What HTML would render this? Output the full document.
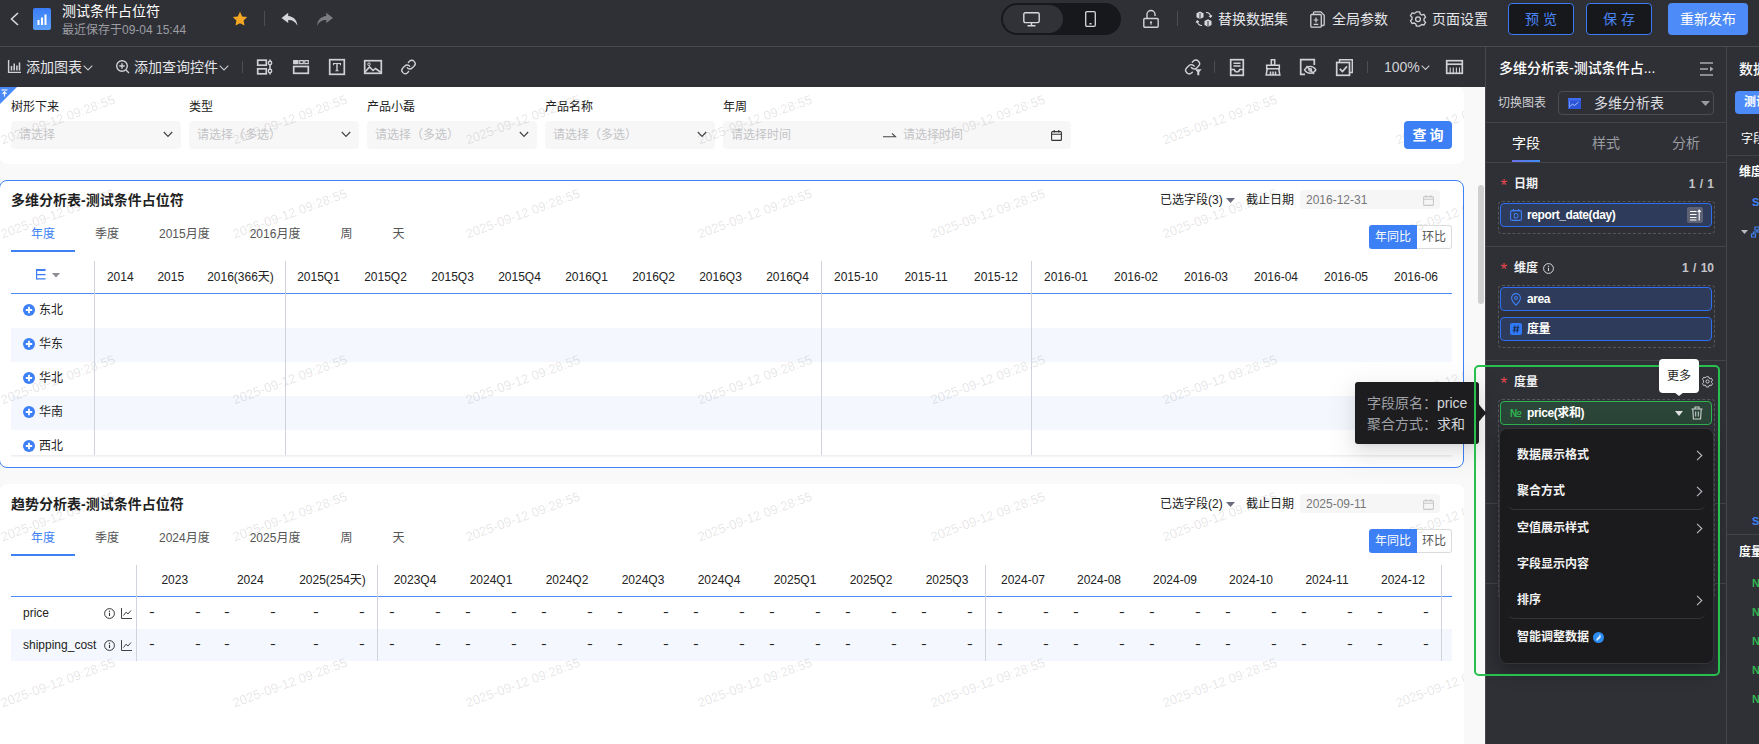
<!DOCTYPE html>
<html lang="zh-CN">
<head>
<meta charset="utf-8">
<title>测试条件占位符</title>
<style>
*{box-sizing:border-box;margin:0;padding:0}
html,body{width:1759px;height:744px;overflow:hidden;background:#2f3036}
body{font-family:"Liberation Sans","Noto Sans CJK SC",sans-serif;font-size:12px;color:#333;position:relative;line-height:1}
.abs{position:absolute}
svg{display:block;overflow:visible}
/* ---------- header ---------- */
#hdr{position:absolute;left:0;top:0;width:1759px;height:47px;background:#2f3036;border-bottom:1px solid #4a4b51}
#tb{position:absolute;left:0;top:47px;width:1485px;height:40px;background:#2f3036}
.ht{position:absolute;color:#e4e5e8;font-size:14px;line-height:20px;white-space:nowrap}
.vdiv{position:absolute;width:1px;background:#4d4e54}
.btn{position:absolute;top:3px;height:32px;border-radius:4px;font-size:14px;line-height:30px;text-align:center;white-space:nowrap}
.btn.ghost{border:1px solid #3b7af0;background:#17181c;color:#4a86f7}
.btn.pri{background:#4d8bf8;color:#fff;line-height:32px}
/* ---------- canvas ---------- */
#canvas{position:absolute;left:0;top:87px;width:1485px;height:657px;background:#f9f9f9;overflow:hidden}
#filter{position:absolute;left:0;top:0;width:1464px;height:77px;background:#fff;border-radius:0 8px 8px 8px;overflow:hidden}
.flab{position:absolute;top:12px;font-size:12px;line-height:16px;color:#222;white-space:nowrap}
.fsel{position:absolute;top:34px;height:28px;width:170px;background:rgba(0,0,20,.03);border-radius:4px;color:#c4c4c6;font-size:12px;line-height:28px;padding-left:8px;white-space:nowrap}
.chev{position:absolute;right:8px;top:10px}
.card{position:absolute;left:0;width:1464px;background:#fff;border-radius:8px;overflow:hidden}
.ctitle{position:absolute;left:11px;font-size:14px;font-weight:bold;color:#1f1f1f;line-height:20px;white-space:nowrap}
.tab{position:absolute;font-size:12px;line-height:16px;color:#555;white-space:nowrap}
.tab.on{color:#3d7ff5}
.wm{position:absolute;width:140px;text-align:center;font-size:13px;line-height:14px;color:rgba(0,0,0,.115);white-space:nowrap;transform:rotate(-20deg);transform-origin:center;pointer-events:none}
.sel{position:absolute;font-size:12px;line-height:16px;color:#222;white-space:nowrap}
.dbox{position:absolute;left:1300px;width:140px;height:18.500px;background:rgba(0,0,20,.035);border-radius:3px;color:#777;font-size:12px;line-height:20px;padding-left:6px}
.yoy{position:absolute;left:1369px;width:48px;height:24px;background:#3d7ff5;color:#fff;font-size:12px;line-height:24px;text-align:center;border-radius:3px 0 0 3px}
.mom{position:absolute;left:1417px;width:35px;height:24px;background:transparent;border:1px solid #dcdcdc;border-left:none;color:#555;font-size:12px;line-height:22px;text-align:center;border-radius:0 3px 3px 0}
.th{position:absolute;font-size:12px;line-height:16px;color:#222;text-align:center;white-space:nowrap}
.vl{position:absolute;width:1px;background:#cfd3de}
.row{position:absolute;left:11px;width:1441px}
.row.alt{background:rgba(61,127,245,.055)}
.rl{position:absolute;font-size:12px;line-height:16px;color:#222;white-space:nowrap}
.d{position:absolute;top:7px;font-size:12px;line-height:16px;color:#222;font-style:normal;transform:scaleX(1.45)}
/* ---------- panel ---------- */
#panel{position:absolute;left:1485px;top:47px;width:242px;height:697px;background:#2f3036;border-left:1px solid #46474d;overflow:hidden}
#p3{position:absolute;left:1726px;top:47px;width:33px;height:697px;background:#2f3036;border-left:1px solid #46474d;overflow:hidden}
.pl{position:absolute;color:#e8e8ea;white-space:nowrap}
.hdiv{position:absolute;height:1px;background:#43444a}
.star{color:#e8474d}
.dash{position:absolute;left:12px;width:217px;border:1px dashed #55565c;border-radius:4px}
.pill{position:absolute;left:14px;width:212px;height:24px;border-radius:4px;border:1px solid #2f6ff2;background:#2e3b5a;color:#fff;font-weight:bold;font-size:12px;line-height:22px;padding-left:26px;white-space:nowrap;letter-spacing:-.4px}
.pill.g{border-color:#2fb650;background:#2b4539}
.mi{position:absolute;left:17px;font-size:12px;font-weight:bold;color:#f2f2f2;line-height:16px;white-space:nowrap}
</style>
</head>
<body>
<!-- HEADER -->
<div id="hdr">
  <svg class="abs" style="left:10px;top:12px" width="9" height="14" viewBox="0 0 9 14"><path d="M8 1 L1.5 7 L8 13" fill="none" stroke="#d8d9dc" stroke-width="1.6"/></svg>
  <div class="abs" style="left:33px;top:8px;width:18px;height:22px;border-radius:2px;background:linear-gradient(180deg,#3b7df7,#5aa0fa)">
    <svg width="18" height="22" viewBox="0 0 18 22"><rect x="4.5" y="12" width="2" height="5" fill="#fff"/><rect x="8" y="9.5" width="2" height="7.5" fill="#fff"/><rect x="11.5" y="6.5" width="2" height="10.5" fill="#fff"/></svg>
  </div>
  <div class="ht" style="left:62px;top:1px;color:#fff">测试条件占位符</div>
  <div class="ht" style="left:62px;top:21px;font-size:12px;line-height:18px;color:#9c9da3">最近保存于09-04 15:44</div>
  <svg class="abs" style="left:232px;top:11px" width="16" height="16" viewBox="0 0 16 16"><path d="M8 .8l2.2 4.6 5 .7-3.6 3.5.9 5L8 12.2 3.5 14.6l.9-5L.8 6.100l5-.7z" fill="#f5a623"/></svg>
  <div class="vdiv" style="left:264px;top:11px;height:15px"></div>
  <svg class="abs" style="left:281px;top:12px" width="17.500" height="15" viewBox="0 0 17 14"><path d="M7 0.500 L0.500 5.500 L7 10.500 V7.500 C11 7.300 14 9 16 13 C15.500 7.500 12 4 7 3.600 Z" fill="#d4d5d9"/></svg>
  <svg class="abs" style="left:316px;top:12px" width="17.500" height="15" viewBox="0 0 17 14"><path d="M10 0.500 L16.500 5.500 L10 10.500 V7.500 C6 7.300 3 9 1 13 C1.500 7.500 5 4 10 3.600 Z" fill="#7b7c82"/></svg>
  <!-- device toggle -->
  <div class="abs" style="left:1001px;top:3px;width:120px;height:32px;border-radius:16px;background:#17181b"></div>
  <div class="abs" style="left:1003px;top:5px;width:60px;height:28px;border-radius:14px;background:#303238"></div>
  <svg class="abs" style="left:1023px;top:12px" width="17" height="15" viewBox="0 0 17 15"><rect x=".8" y=".8" width="15.400" height="9.800" rx="1.500" fill="none" stroke="#d8d9dc" stroke-width="1.400"/><path d="M8.500 10.600v3M4.500 13.800h8" stroke="#d8d9dc" stroke-width="1.400"/></svg>
  <svg class="abs" style="left:1085px;top:11px" width="11" height="16" viewBox="0 0 11 16"><rect x=".7" y=".7" width="9.600" height="14.600" rx="1.200" fill="none" stroke="#d8d9dc" stroke-width="1.300"/><rect x="4.500" y="12" width="2" height="1.500" fill="#d8d9dc"/></svg>
  <svg class="abs" style="left:1143px;top:10px" width="16" height="18" viewBox="0 0 16 18"><rect x=".8" y="8.500" width="14.400" height="8.700" rx="1" fill="none" stroke="#d0d1d5" stroke-width="1.400"/><path d="M4 8.500V4.500a4 4 0 0 1 8 0V6" fill="none" stroke="#d0d1d5" stroke-width="1.400"/><circle cx="8" cy="12.300" r="1.100" fill="#d0d1d5"/><rect x="7.500" y="12.500" width="1" height="2.300" fill="#d0d1d5"/></svg>
  <div class="vdiv" style="left:1177px;top:11px;height:15px"></div>
  <!-- replace dataset -->
  <svg class="abs" style="left:1195px;top:10px" width="18" height="18" viewBox="0 0 18 18"><path d="M1.500 3.200l3.500-1.700 3.500 1.700v4l-3.500 1.700-3.500-1.700z" fill="#d8d9dc"/><path d="M9.500 11l3.500-1.700 3.500 1.700v4l-3.500 1.700-3.500-1.700z" fill="#d8d9dc"/><path d="M5 3.200v5.500M13 11v5.500" stroke="#2f3036" stroke-width="1"/><path d="M11 2.500c3 0 4.500 1.800 4.700 4.500M14 5.800l1.700 1.400 1.300-1.800M7 15.500c-3 0-4.500-1.800-4.700-4.500M4 12.200l-1.700-1.400L1 12.600" fill="none" stroke="#d8d9dc" stroke-width="1.100"/></svg>
  <div class="ht" style="left:1218px;top:9px">替换数据集</div>
  <svg class="abs" style="left:1310px;top:11px" width="15" height="17" viewBox="0 0 15 17"><path d="M3.500 3.500V1.800a1 1 0 0 1 1-1h6.300l3.400 3.400v9.300a1 1 0 0 1-1 1h-1.500" fill="none" stroke="#d0d1d5" stroke-width="1.300"/><rect x=".8" y="3.500" width="10.500" height="12.700" rx="1" fill="none" stroke="#d0d1d5" stroke-width="1.300"/><path d="M6 6.500v5M3.700 9h4.600M3.700 13.300h4.600" stroke="#d0d1d5" stroke-width="1.200"/></svg>
  <div class="ht" style="left:1332px;top:9px">全局参数</div>
  <svg class="abs" style="left:1410px;top:11px" width="16" height="17" viewBox="0 0 16 17"><path d="M6.300 1h3.400l.7 2.200 1.700 1 2.200-.5 1.700 2.900-1.600 1.700v2l1.600 1.700-1.700 2.900-2.200-.5-1.700 1L9.700 16H6.300l-.7-2.200-1.700-1-2.200.5L0 10.400l1.600-1.700v-2L0 5l1.700-2.900 2.200.5 1.700-1z" transform="translate(.5 0) scale(.94)" fill="none" stroke="#d0d1d5" stroke-width="1.400"/><circle cx="8" cy="8.300" r="2.400" fill="none" stroke="#d0d1d5" stroke-width="1.300"/></svg>
  <div class="ht" style="left:1432px;top:9px">页面设置</div>
  <div class="btn ghost" style="left:1508px;width:66px">预 览</div>
  <div class="btn ghost" style="left:1586px;width:66px">保 存</div>
  <div class="btn pri" style="left:1668px;width:80px">重新发布</div>
</div>
<!-- TOOLBAR -->
<div id="tb">
  <svg class="abs" style="left:8px;top:13px" width="13" height="13" viewBox="0 0 13 13"><path d="M.6 0v12.400H13" fill="none" stroke="#d0d1d5" stroke-width="1.400"/><path d="M3.500 6v4.500M6.200 3.500v7M8.900 5.500v5M11.500 2.500v8" stroke="#d0d1d5" stroke-width="1.550"/></svg>
  <div class="ht" style="left:26px;top:10px">添加图表</div>
  <svg class="abs" style="left:83px;top:18px" width="10" height="6" viewBox="0 0 10 6"><path d="M.7.7L5 5l4.300-4.300" fill="none" stroke="#c8c9cd" stroke-width="1.100"/></svg>
  <svg class="abs" style="left:116px;top:13px" width="14" height="14" viewBox="0 0 14 14"><circle cx="6" cy="6" r="5.300" fill="none" stroke="#d0d1d5" stroke-width="1.400"/><path d="M6 3.300v5.400M3.300 6h5.400M10 10l3 3" stroke="#d0d1d5" stroke-width="1.400"/></svg>
  <div class="ht" style="left:134px;top:10px">添加查询控件</div>
  <svg class="abs" style="left:219px;top:18px" width="10" height="6" viewBox="0 0 10 6"><path d="M.7.7L5 5l4.300-4.300" fill="none" stroke="#c8c9cd" stroke-width="1.100"/></svg>
  <div class="vdiv" style="left:242px;top:14px;height:12px"></div>
  <!-- icon: filter layout -->
  <svg class="abs" style="left:257px;top:12px" width="16" height="16" viewBox="0 0 16 16"><rect x=".7" y="1.200" width="8.600" height="5" fill="none" stroke="#d0d1d5" stroke-width="1.700"/><rect x=".7" y="9.800" width="8.600" height="5" fill="none" stroke="#d0d1d5" stroke-width="1.700"/><path d="M13 .5v15" stroke="#d0d1d5" stroke-width="1.550"/><circle cx="13" cy="4" r="1.700" fill="#2f3036" stroke="#d0d1d5" stroke-width="1.400"/><circle cx="13" cy="12" r="1.700" fill="#2f3036" stroke="#d0d1d5" stroke-width="1.400"/></svg>
  <!-- icon: tab container -->
  <svg class="abs" style="left:293px;top:13px" width="16" height="14" viewBox="0 0 16 14"><path d="M.7.700h4.300v3H.7z" fill="#d0d1d5" stroke="#d0d1d5" stroke-width="1.200"/><path d="M6.700.700h3.600v3H6.700zM11.800.700h3.500v3h-3.500z" fill="none" stroke="#d0d1d5" stroke-width="1.200"/><rect x=".7" y="6.500" width="14.600" height="6.800" fill="none" stroke="#d0d1d5" stroke-width="1.700"/></svg>
  <!-- icon: text -->
  <svg class="abs" style="left:329px;top:12px" width="16" height="16" viewBox="0 0 16 16"><rect x=".7" y=".7" width="14.600" height="14.600" fill="none" stroke="#d0d1d5" stroke-width="1.700"/><path d="M4 4h8v2.200h-1L10.700 5H8.700v6.300l1 .3v.6H6.300v-.6l1-.3V5H5.300L5 6.200H4z" fill="#d0d1d5"/></svg>
  <!-- icon: image -->
  <svg class="abs" style="left:364px;top:13px" width="18" height="14" viewBox="0 0 18 14"><rect x=".7" y=".7" width="16.600" height="12.600" fill="none" stroke="#d0d1d5" stroke-width="1.700"/><path d="M1 12l4.500-5 3.500 3.500 2.500-2 5.500 4" fill="none" stroke="#d0d1d5" stroke-width="1.550"/><circle cx="5" cy="4.200" r="1.300" fill="none" stroke="#d0d1d5" stroke-width="1"/></svg>
  <!-- icon: link -->
  <svg class="abs" style="left:400px;top:12px" width="17" height="16" viewBox="0 0 24 24"><path d="M10 13a5 5 0 0 0 7.540.54l3-3a5 5 0 0 0-7.070-7.070l-1.720 1.710" fill="none" stroke="#d0d1d5" stroke-width="2" stroke-linecap="round"/><path d="M14 11a5 5 0 0 0-7.540-.54l-3 3a5 5 0 0 0 7.070 7.070l1.710-1.710" fill="none" stroke="#d0d1d5" stroke-width="2" stroke-linecap="round"/></svg>
  <!-- right icons -->
  <svg class="abs" style="left:1185px;top:12px" width="17" height="17" viewBox="0 0 24 24"><path d="M9 12a5 5 0 0 0 7.540.54l2.500-2.500a5 5 0 0 0-7.070-7.070l-1.720 1.710" fill="none" stroke="#d0d1d5" stroke-width="2" stroke-linecap="round"/><path d="M13 10a5 5 0 0 0-7.540-.54l-3 3a5 5 0 0 0 7.070 7.070l.8-.8" fill="none" stroke="#d0d1d5" stroke-width="2" stroke-linecap="round"/><path d="M14 14.500h9.500l-3.300 4v4.500h-2.900v-4.500z" fill="#d0d1d5"/></svg>
  <div class="vdiv" style="left:1214px;top:14px;height:12px"></div>
  <svg class="abs" style="left:1230px;top:12px" width="14" height="17" viewBox="0 0 14 17"><rect x=".7" y=".7" width="12.600" height="15.600" fill="none" stroke="#d0d1d5" stroke-width="1.700"/><path d="M3.500 4.200h7M3.500 7h7" stroke="#d0d1d5" stroke-width="1.400"/><path d="M.7 10.500h3.600c.3 1.600 1.300 2.400 2.700 2.400s2.400-.8 2.700-2.400h3.600" fill="none" stroke="#d0d1d5" stroke-width="1.400"/></svg>
  <svg class="abs" style="left:1265px;top:12px" width="16" height="17" viewBox="0 0 16 17"><path d="M6.300.7h3.400v5.500H6.300z" fill="none" stroke="#d0d1d5" stroke-width="1.550"/><path d="M1.700 6.200h12.600v3.600H1.700z" fill="none" stroke="#d0d1d5" stroke-width="1.550"/><path d="M2.200 9.800L1.200 16h13.600l-1-6.200M5.500 16v-3.500M8 16v-3.500M10.500 16v-3.500" fill="none" stroke="#d0d1d5" stroke-width="1.550"/></svg>
  <svg class="abs" style="left:1300px;top:12px" width="17" height="17" viewBox="0 0 17 17"><path d="M5 15.300H.7V.7h13.600V6" fill="none" stroke="#d0d1d5" stroke-width="1.700"/><path d="M4.500 10.800c1.500-2.300 3.400-3.400 5.700-3.400s4.200 1.100 5.700 3.400c-1.500 2.300-3.400 3.400-5.700 3.400s-4.200-1.100-5.700-3.400z" fill="none" stroke="#d0d1d5" stroke-width="1.400"/><circle cx="10.200" cy="10.800" r="1.500" fill="none" stroke="#d0d1d5" stroke-width="1.100"/><path d="M6.500 7l7.500 8" stroke="#d0d1d5" stroke-width="1.400"/></svg>
  <svg class="abs" style="left:1336px;top:12px" width="17" height="17" viewBox="0 0 17 17"><path d="M3.500 3.500V.7h12.800v12.800h-2.800" fill="none" stroke="#d0d1d5" stroke-width="1.400"/><rect x=".7" y="3.500" width="12.800" height="12.800" fill="none" stroke="#d0d1d5" stroke-width="1.700"/><path d="M3.800 9.800l2.700 2.800 4.500-5.200" fill="none" stroke="#d0d1d5" stroke-width="1.700"/></svg>
  <div class="vdiv" style="left:1367px;top:14px;height:12px"></div>
  <div class="ht" style="left:1384px;top:10px;color:#d0d1d5">100%</div>
  <svg class="abs" style="left:1421px;top:18px" width="9" height="6" viewBox="0 0 9 6"><path d="M.7.7l3.800 3.800L8.300.7" fill="none" stroke="#c8c9cd" stroke-width="1.100"/></svg>
  <svg class="abs" style="left:1446px;top:13px" width="17" height="14" viewBox="0 0 17 14"><rect x=".7" y=".7" width="15.600" height="12.600" fill="none" stroke="#d0d1d5" stroke-width="1.700"/><path d="M.7 4.200h15.600" stroke="#d0d1d5" stroke-width="1.700"/><path d="M4.200 7.500V13M7.300 7.500V13M10.400 7.500V13M13.500 7.500V13" stroke="#d0d1d5" stroke-width="1.100"/></svg>
</div>
<!-- CANVAS -->
<div id="canvas">
<div id="filter">
<div class="wm" style="left:-12.5px;top:26px">2025-09-12 09:28:55</div><div class="wm" style="left:220.0px;top:26px">2025-09-12 09:28:55</div><div class="wm" style="left:452.5px;top:26px">2025-09-12 09:28:55</div><div class="wm" style="left:685.0px;top:26px">2025-09-12 09:28:55</div><div class="wm" style="left:917.5px;top:26px">2025-09-12 09:28:55</div><div class="wm" style="left:1150.0px;top:26px">2025-09-12 09:28:55</div><div class="wm" style="left:1382.5px;top:26px">2025-09-12 09:28:55</div>
<svg class="abs" style="left:0;top:0" width="17" height="17" viewBox="0 0 17 17"><path d="M0 0h17L0 17z" fill="#4a8af6"/><path d="M1.500 3h6M4.500 9.500V5M2.500 6.800l2-2 2 2" fill="none" stroke="#fff" stroke-width="1.100"/></svg>
<div class="flab" style="left:11px">树形下来</div>
<div class="fsel" style="left:11px">请选择<svg class="chev" width="10" height="7" viewBox="0 0 10 7"><path d="M.8 1l4.200 4.300L9.200 1" fill="none" stroke="#444" stroke-width="1.200"/></svg></div>
<div class="flab" style="left:189px">类型</div>
<div class="fsel" style="left:189px">请选择（多选）<svg class="chev" width="10" height="7" viewBox="0 0 10 7"><path d="M.8 1l4.200 4.300L9.200 1" fill="none" stroke="#444" stroke-width="1.200"/></svg></div>
<div class="flab" style="left:367px">产品小磊</div>
<div class="fsel" style="left:367px">请选择（多选）<svg class="chev" width="10" height="7" viewBox="0 0 10 7"><path d="M.8 1l4.200 4.300L9.200 1" fill="none" stroke="#444" stroke-width="1.200"/></svg></div>
<div class="flab" style="left:545px">产品名称</div>
<div class="fsel" style="left:545px">请选择（多选）<svg class="chev" width="10" height="7" viewBox="0 0 10 7"><path d="M.8 1l4.200 4.300L9.200 1" fill="none" stroke="#444" stroke-width="1.200"/></svg></div>
<div class="flab" style="left:723px">年周</div>
<div class="fsel" style="left:723px;width:348px">请选择时间<span style="position:absolute;left:180px">请选择时间</span><svg class="abs" style="left:160px;top:11px" width="13" height="6" viewBox="0 0 13 6"><path d="M0 4.800h12.500L9 1.300" fill="none" stroke="#444" stroke-width="1.100"/></svg><svg class="abs" style="left:328px;top:9px" width="11" height="11" viewBox="0 0 11 11"><rect x=".6" y="1.600" width="9.800" height="8.800" rx="1" fill="none" stroke="#333" stroke-width="1.100"/><path d="M.6 4.300h9.800M3.200 0v2.500M7.800 0v2.500" stroke="#333" stroke-width="1.100"/></svg></div>
<div class="abs" style="left:1404px;top:34px;width:48px;height:28px;border-radius:4px;background:#3d7ff5;color:#fff;font-size:14px;font-weight:bold;line-height:28px;text-align:center;letter-spacing:3px;padding-left:3px">查询</div>
</div>
<div class="card" id="c1" style="left:-1px;width:1465px;top:93px;height:288px;border:1px solid #3f82f6">
<div class="abs" style="left:0;top:0;width:1464px;height:287px">
<div class="wm" style="left:-12.5px;top:26px">2025-09-12 09:28:55</div><div class="wm" style="left:220.0px;top:26px">2025-09-12 09:28:55</div><div class="wm" style="left:452.5px;top:26px">2025-09-12 09:28:55</div><div class="wm" style="left:685.0px;top:26px">2025-09-12 09:28:55</div><div class="wm" style="left:917.5px;top:26px">2025-09-12 09:28:55</div><div class="wm" style="left:1150.0px;top:26px">2025-09-12 09:28:55</div><div class="wm" style="left:1382.5px;top:26px">2025-09-12 09:28:55</div><div class="wm" style="left:-12.5px;top:192px">2025-09-12 09:28:55</div><div class="wm" style="left:220.0px;top:192px">2025-09-12 09:28:55</div><div class="wm" style="left:452.5px;top:192px">2025-09-12 09:28:55</div><div class="wm" style="left:685.0px;top:192px">2025-09-12 09:28:55</div><div class="wm" style="left:917.5px;top:192px">2025-09-12 09:28:55</div><div class="wm" style="left:1150.0px;top:192px">2025-09-12 09:28:55</div><div class="wm" style="left:1382.5px;top:192px">2025-09-12 09:28:55</div>
<div class="ctitle" style="top:9px">多维分析表-测试条件占位符</div>
<div class="sel" style="left:1160px;top:11px">已选字段(3)</div>
<svg class="abs" style="left:1226px;top:17px" width="9" height="5" viewBox="0 0 9 5"><path d="M0 0h9L4.500 5z" fill="#686c7c"/></svg>
<div class="sel" style="left:1246px;top:11px">截止日期</div>
<div class="dbox" style="top:9px">2016-12-31<svg class="abs" style="left:123px;top:5px" width="11" height="11" viewBox="0 0 11 11"><rect x=".6" y="1.600" width="9.800" height="8.800" rx="1" fill="none" stroke="#c9c9cc" stroke-width="1.100"/><path d="M.6 4.300h9.800M3.200 0v2.500M7.800 0v2.500" stroke="#c9c9cc" stroke-width="1.100"/></svg></div>
<div class="yoy" style="top:44px">年同比</div><div class="mom" style="top:44px">环比</div>
<div class="tab on" style="left:31px;top:45px">年度</div>
<div class="tab" style="left:95px;top:45px">季度</div>
<div class="tab" style="left:159px;top:45px">2015月度</div>
<div class="tab" style="left:249.7px;top:45px">2016月度</div>
<div class="tab" style="left:340.4px;top:45px">周</div>
<div class="tab" style="left:392.4px;top:45px">天</div>
<div class="abs" style="left:11px;top:69px;width:64px;height:2px;background:#3d7ff5"></div>
<div class="abs" style="left:11px;top:112px;width:1441px;height:1px;background:#4e8cf7"></div>
<div class="row" style="top:113px;height:34px"><svg class="abs" style="left:12px;top:10px" width="12" height="12" viewBox="0 0 12 12"><circle cx="6" cy="6" r="6" fill="#3d7ff5"/><path d="M6 2.800v6.400M2.800 6h6.400" stroke="#fff" stroke-width="1.800"/></svg><div class="rl" style="left:28px;top:8px">东北</div></div>
<div class="row alt" style="top:147px;height:34px"><svg class="abs" style="left:12px;top:10px" width="12" height="12" viewBox="0 0 12 12"><circle cx="6" cy="6" r="6" fill="#3d7ff5"/><path d="M6 2.800v6.400M2.800 6h6.400" stroke="#fff" stroke-width="1.800"/></svg><div class="rl" style="left:28px;top:8px">华东</div></div>
<div class="row" style="top:181px;height:34px"><svg class="abs" style="left:12px;top:10px" width="12" height="12" viewBox="0 0 12 12"><circle cx="6" cy="6" r="6" fill="#3d7ff5"/><path d="M6 2.800v6.400M2.800 6h6.400" stroke="#fff" stroke-width="1.800"/></svg><div class="rl" style="left:28px;top:8px">华北</div></div>
<div class="row alt" style="top:215px;height:34px"><svg class="abs" style="left:12px;top:10px" width="12" height="12" viewBox="0 0 12 12"><circle cx="6" cy="6" r="6" fill="#3d7ff5"/><path d="M6 2.800v6.400M2.800 6h6.400" stroke="#fff" stroke-width="1.800"/></svg><div class="rl" style="left:28px;top:8px">华南</div></div>
<div class="row" style="top:249px;height:25px"><svg class="abs" style="left:12px;top:10px" width="12" height="12" viewBox="0 0 12 12"><circle cx="6" cy="6" r="6" fill="#3d7ff5"/><path d="M6 2.800v6.400M2.800 6h6.400" stroke="#fff" stroke-width="1.800"/></svg><div class="rl" style="left:28px;top:8px">西北</div></div>
<svg class="abs" style="left:36px;top:88px" width="10" height="11" viewBox="0 0 10 11"><path d="M.6 0v10.500" stroke="#3d7ff5" stroke-width="1.200"/><path d="M.6 1.100h9" stroke="#3d7ff5" stroke-width="2"/><path d="M.6 5.600h9M.6 9.900h9" stroke="#3d7ff5" stroke-width="1.100"/></svg>
<svg class="abs" style="left:52px;top:92px" width="8" height="4.500" viewBox="0 0 8 4.500"><path d="M0 0h8L4 4.500z" fill="#8a8d93"/></svg>
<div class="th" style="left:95px;width:50.5px;top:88px">2014</div>
<div class="th" style="left:145.5px;width:50.5px;top:88px">2015</div>
<div class="th" style="left:196.0px;width:89px;top:88px">2016(366天)</div>
<div class="th" style="left:285.0px;width:67px;top:88px">2015Q1</div>
<div class="th" style="left:352.0px;width:67px;top:88px">2015Q2</div>
<div class="th" style="left:419.0px;width:67px;top:88px">2015Q3</div>
<div class="th" style="left:486.0px;width:67px;top:88px">2015Q4</div>
<div class="th" style="left:553.0px;width:67px;top:88px">2016Q1</div>
<div class="th" style="left:620.0px;width:67px;top:88px">2016Q2</div>
<div class="th" style="left:687.0px;width:67px;top:88px">2016Q3</div>
<div class="th" style="left:754.0px;width:67px;top:88px">2016Q4</div>
<div class="th" style="left:821.0px;width:70px;top:88px">2015-10</div>
<div class="th" style="left:891.0px;width:70px;top:88px">2015-11</div>
<div class="th" style="left:961.0px;width:70px;top:88px">2015-12</div>
<div class="th" style="left:1031.0px;width:70px;top:88px">2016-01</div>
<div class="th" style="left:1101.0px;width:70px;top:88px">2016-02</div>
<div class="th" style="left:1171.0px;width:70px;top:88px">2016-03</div>
<div class="th" style="left:1241.0px;width:70px;top:88px">2016-04</div>
<div class="th" style="left:1311.0px;width:70px;top:88px">2016-05</div>
<div class="th" style="left:1381.0px;width:70px;top:88px">2016-06</div>
<div class="vl" style="left:94px;top:80px;height:194px"></div>
<div class="vl" style="left:285px;top:80px;height:194px"></div>
<div class="vl" style="left:821px;top:80px;height:194px"></div>
<div class="vl" style="left:1031px;top:80px;height:194px"></div>
<div class="abs" style="left:11px;top:274px;width:1441px;height:3px;background:linear-gradient(#ececee,#fff)"></div>
</div></div>
<div class="card" id="c2" style="top:397px;height:270px">
<div class="wm" style="left:-12.5px;top:26px">2025-09-12 09:28:55</div><div class="wm" style="left:220.0px;top:26px">2025-09-12 09:28:55</div><div class="wm" style="left:452.5px;top:26px">2025-09-12 09:28:55</div><div class="wm" style="left:685.0px;top:26px">2025-09-12 09:28:55</div><div class="wm" style="left:917.5px;top:26px">2025-09-12 09:28:55</div><div class="wm" style="left:1150.0px;top:26px">2025-09-12 09:28:55</div><div class="wm" style="left:1382.5px;top:26px">2025-09-12 09:28:55</div><div class="wm" style="left:-12.5px;top:192px">2025-09-12 09:28:55</div><div class="wm" style="left:220.0px;top:192px">2025-09-12 09:28:55</div><div class="wm" style="left:452.5px;top:192px">2025-09-12 09:28:55</div><div class="wm" style="left:685.0px;top:192px">2025-09-12 09:28:55</div><div class="wm" style="left:917.5px;top:192px">2025-09-12 09:28:55</div><div class="wm" style="left:1150.0px;top:192px">2025-09-12 09:28:55</div><div class="wm" style="left:1382.5px;top:192px">2025-09-12 09:28:55</div>
<div class="ctitle" style="top:10px">趋势分析表-测试条件占位符</div>
<div class="sel" style="left:1160px;top:12px">已选字段(2)</div>
<svg class="abs" style="left:1226px;top:18px" width="9" height="5" viewBox="0 0 9 5"><path d="M0 0h9L4.500 5z" fill="#686c7c"/></svg>
<div class="sel" style="left:1246px;top:12px">截止日期</div>
<div class="dbox" style="top:10px">2025-09-11<svg class="abs" style="left:123px;top:5px" width="11" height="11" viewBox="0 0 11 11"><rect x=".6" y="1.600" width="9.800" height="8.800" rx="1" fill="none" stroke="#c9c9cc" stroke-width="1.100"/><path d="M.6 4.300h9.800M3.200 0v2.500M7.800 0v2.500" stroke="#c9c9cc" stroke-width="1.100"/></svg></div>
<div class="yoy" style="top:45px">年同比</div><div class="mom" style="top:45px">环比</div>
<div class="tab on" style="left:31px;top:46px">年度</div>
<div class="tab" style="left:95px;top:46px">季度</div>
<div class="tab" style="left:159px;top:46px">2024月度</div>
<div class="tab" style="left:249.7px;top:46px">2025月度</div>
<div class="tab" style="left:340.4px;top:46px">周</div>
<div class="tab" style="left:392.4px;top:46px">天</div>
<div class="abs" style="left:11px;top:70px;width:64px;height:2px;background:#3d7ff5"></div>
<div class="abs" style="left:11px;top:112px;width:1441px;height:1px;background:#4e8cf7"></div>
<div class="row" style="top:113px;height:32px"><div class="rl" style="left:12px;top:8px">price</div><svg class="abs" style="left:93px;top:11px" width="11" height="11" viewBox="0 0 11 11"><circle cx="5.500" cy="5.500" r="4.900" fill="none" stroke="#333" stroke-width="1"/><path d="M5.500 4.800v3.200" stroke="#333" stroke-width="1.100"/><circle cx="5.500" cy="3.300" r=".7" fill="#333"/></svg><svg class="abs" style="left:110px;top:11px" width="11" height="11" viewBox="0 0 11 11"><path d="M.5 0v10.500H11" fill="none" stroke="#444" stroke-width="1"/><path d="M2.500 7.500l2.500-3.300 2 1.800 3-3.500" fill="none" stroke="#444" stroke-width="1"/></svg>
<i class="d" style="left:184.7px">-</i><i class="d" style="left:138.7px">-</i>
<i class="d" style="left:260.2px">-</i><i class="d" style="left:214.2px">-</i>
<i class="d" style="left:349.2px">-</i><i class="d" style="left:303.2px">-</i>
<i class="d" style="left:425.2px">-</i><i class="d" style="left:379.2px">-</i>
<i class="d" style="left:501.2px">-</i><i class="d" style="left:455.2px">-</i>
<i class="d" style="left:577.2px">-</i><i class="d" style="left:531.2px">-</i>
<i class="d" style="left:653.2px">-</i><i class="d" style="left:607.2px">-</i>
<i class="d" style="left:729.2px">-</i><i class="d" style="left:683.2px">-</i>
<i class="d" style="left:805.2px">-</i><i class="d" style="left:759.2px">-</i>
<i class="d" style="left:881.2px">-</i><i class="d" style="left:835.2px">-</i>
<i class="d" style="left:957.2px">-</i><i class="d" style="left:911.2px">-</i>
<i class="d" style="left:1033.2px">-</i><i class="d" style="left:987.2px">-</i>
<i class="d" style="left:1109.2px">-</i><i class="d" style="left:1063.2px">-</i>
<i class="d" style="left:1185.2px">-</i><i class="d" style="left:1139.2px">-</i>
<i class="d" style="left:1261.2px">-</i><i class="d" style="left:1215.2px">-</i>
<i class="d" style="left:1337.2px">-</i><i class="d" style="left:1291.2px">-</i>
<i class="d" style="left:1413.2px">-</i><i class="d" style="left:1367.2px">-</i>
</div>
<div class="row alt" style="top:145px;height:32px"><div class="rl" style="left:12px;top:8px">shipping_cost</div><svg class="abs" style="left:93px;top:11px" width="11" height="11" viewBox="0 0 11 11"><circle cx="5.500" cy="5.500" r="4.900" fill="none" stroke="#333" stroke-width="1"/><path d="M5.500 4.800v3.200" stroke="#333" stroke-width="1.100"/><circle cx="5.500" cy="3.300" r=".7" fill="#333"/></svg><svg class="abs" style="left:110px;top:11px" width="11" height="11" viewBox="0 0 11 11"><path d="M.5 0v10.500H11" fill="none" stroke="#444" stroke-width="1"/><path d="M2.500 7.500l2.500-3.300 2 1.800 3-3.500" fill="none" stroke="#444" stroke-width="1"/></svg>
<i class="d" style="left:184.7px">-</i><i class="d" style="left:138.7px">-</i>
<i class="d" style="left:260.2px">-</i><i class="d" style="left:214.2px">-</i>
<i class="d" style="left:349.2px">-</i><i class="d" style="left:303.2px">-</i>
<i class="d" style="left:425.2px">-</i><i class="d" style="left:379.2px">-</i>
<i class="d" style="left:501.2px">-</i><i class="d" style="left:455.2px">-</i>
<i class="d" style="left:577.2px">-</i><i class="d" style="left:531.2px">-</i>
<i class="d" style="left:653.2px">-</i><i class="d" style="left:607.2px">-</i>
<i class="d" style="left:729.2px">-</i><i class="d" style="left:683.2px">-</i>
<i class="d" style="left:805.2px">-</i><i class="d" style="left:759.2px">-</i>
<i class="d" style="left:881.2px">-</i><i class="d" style="left:835.2px">-</i>
<i class="d" style="left:957.2px">-</i><i class="d" style="left:911.2px">-</i>
<i class="d" style="left:1033.2px">-</i><i class="d" style="left:987.2px">-</i>
<i class="d" style="left:1109.2px">-</i><i class="d" style="left:1063.2px">-</i>
<i class="d" style="left:1185.2px">-</i><i class="d" style="left:1139.2px">-</i>
<i class="d" style="left:1261.2px">-</i><i class="d" style="left:1215.2px">-</i>
<i class="d" style="left:1337.2px">-</i><i class="d" style="left:1291.2px">-</i>
<i class="d" style="left:1413.2px">-</i><i class="d" style="left:1367.2px">-</i>
</div>
<div class="th" style="left:137px;width:75.5px;top:88px">2023</div>
<div class="th" style="left:212.5px;width:75.5px;top:88px">2024</div>
<div class="th" style="left:288.0px;width:89px;top:88px">2025(254天)</div>
<div class="th" style="left:377.0px;width:76px;top:88px">2023Q4</div>
<div class="th" style="left:453.0px;width:76px;top:88px">2024Q1</div>
<div class="th" style="left:529.0px;width:76px;top:88px">2024Q2</div>
<div class="th" style="left:605.0px;width:76px;top:88px">2024Q3</div>
<div class="th" style="left:681.0px;width:76px;top:88px">2024Q4</div>
<div class="th" style="left:757.0px;width:76px;top:88px">2025Q1</div>
<div class="th" style="left:833.0px;width:76px;top:88px">2025Q2</div>
<div class="th" style="left:909.0px;width:76px;top:88px">2025Q3</div>
<div class="th" style="left:985.0px;width:76px;top:88px">2024-07</div>
<div class="th" style="left:1061.0px;width:76px;top:88px">2024-08</div>
<div class="th" style="left:1137.0px;width:76px;top:88px">2024-09</div>
<div class="th" style="left:1213.0px;width:76px;top:88px">2024-10</div>
<div class="th" style="left:1289.0px;width:76px;top:88px">2024-11</div>
<div class="th" style="left:1365.0px;width:76px;top:88px">2024-12</div>
<div class="vl" style="left:136px;top:81px;height:96px"></div>
<div class="vl" style="left:377px;top:81px;height:96px"></div>
<div class="vl" style="left:985px;top:81px;height:96px"></div>
<div class="vl" style="left:1441px;top:81px;height:96px"></div>
</div>
</div>
<!-- PANELS -->
<div id="panel">
<div class="pl" style="left:13px;top:11px;font-size:14px;line-height:20px;color:#fff;font-weight:500">多维分析表-测试条件占...</div>
<svg class="abs" style="left:214px;top:15px" width="14" height="14" viewBox="0 0 14 14"><path d="M0 1h13M0 7h8M0 13h13" stroke="#a9aab0" stroke-width="1.500"/><path d="M10 4.500l3.500 2.500L10 9.500z" fill="#a9aab0"/></svg>
<div class="pl" style="left:12px;top:48px;font-size:12px;line-height:16px;color:#d0d1d5">切换图表</div>
<div class="abs" style="left:72px;top:44px;width:156px;height:24px;border:1px solid #4b4c52;border-radius:4px"></div>
<svg class="abs" style="left:82px;top:51px" width="13" height="11" viewBox="0 0 13 11"><rect width="13" height="11" fill="#2d55d8"/><rect width="13" height="2.500" fill="#3f6df0"/><path d="M2 8.500l2.500-2.500 2 1.500L10.500 4" fill="none" stroke="#9fc0ff" stroke-width="1"/><path d="M1.500 3v7" stroke="#9fc0ff" stroke-width=".6"/></svg>
<div class="pl" style="left:108px;top:46px;font-size:14px;line-height:20px;color:#dcdde0">多维分析表</div>
<svg class="abs" style="left:215px;top:54px" width="9" height="5" viewBox="0 0 9 5"><path d="M0 0h9L4.500 5z" fill="#9a9ba1"/></svg>
<div class="hdiv" style="left:0;top:75px;width:241px"></div>
<div class="pl" style="left:26px;top:86px;font-size:14px;line-height:20px;color:#fff">字段</div>
<div class="pl" style="left:106px;top:86px;font-size:14px;line-height:20px;color:#9b9ca2">样式</div>
<div class="pl" style="left:186px;top:86px;font-size:14px;line-height:20px;color:#9b9ca2">分析</div>
<div class="abs" style="left:26px;top:113px;width:28px;height:2px;background:linear-gradient(90deg,#6a6fe8,#3f8ef7)"></div>
<div class="hdiv" style="left:0;top:115px;width:241px"></div>
<div class="pl star" style="left:14.5px;top:129.5px;font-size:17px;line-height:16px;color:#e8474d;margin-top:1px">*</div>
<div class="pl" style="left:28px;top:128.5px;font-size:12px;line-height:16px;font-weight:bold;color:#f0f0f2">日期</div>
<div class="pl" style="right:13px;top:128.5px;font-size:12px;line-height:16px;font-weight:bold;color:#c4c5ca;word-spacing:1px">1 / 1</div>
<div class="dash" style="top:154px;height:33px"></div>
<div class="pill" style="top:156px">report_date(day)<svg class="abs" style="left:9px;top:5px" width="12" height="12" viewBox="0 0 12 12"><rect x=".6" y="1.600" width="10.800" height="9.800" rx="1.500" fill="none" stroke="#3f82f8" stroke-width="1.100"/><path d="M3.300 0v2.500M8.700 0v2.500" stroke="#3f82f8" stroke-width="1.100"/><path d="M4.300 4.500h1.700a2 2 0 0 1 0 4.500H4.300z" fill="none" stroke="#3f82f8" stroke-width="1"/></svg><span class="abs" style="left:186px;top:3px;width:16px;height:16px;background:#5d6274;border-radius:2px"><svg width="16" height="16" viewBox="0 0 16 16"><path d="M3 4.500h6.500M3 7.500h6.500M3 10.500h6.500M3 13h6.500" stroke="#fff" stroke-width="1.200"/><path d="M12.200 13.500V3M10.700 4.800l1.500-1.800 1.500 1.800" fill="none" stroke="#fff" stroke-width="1.100"/></svg></span></div>
<div class="hdiv" style="left:0;top:199px;width:241px"></div>
<div class="pl star" style="left:14.5px;top:213.5px;font-size:17px;line-height:16px;color:#e8474d;margin-top:1px">*</div>
<div class="pl" style="left:28px;top:212.5px;font-size:12px;line-height:16px;font-weight:bold;color:#f0f0f2">维度</div>
<svg class="abs" style="left:57px;top:215.5px" width="11" height="11" viewBox="0 0 11 11"><circle cx="5.500" cy="5.500" r="4.900" fill="none" stroke="#d8d8dc" stroke-width="1"/><path d="M5.500 4.800v3.200" stroke="#d8d8dc" stroke-width="1.100"/><circle cx="5.500" cy="3.300" r=".7" fill="#d8d8dc"/></svg>
<div class="pl" style="right:13px;top:212.5px;font-size:12px;line-height:16px;font-weight:bold;color:#c4c5ca;word-spacing:1px">1 / 10</div>
<div class="dash" style="top:238px;height:63px"></div>
<div class="pill" style="top:240px">area<svg class="abs" style="left:10px;top:5px" width="10" height="13" viewBox="0 0 10 13"><path d="M5 .600a4.400 4.400 0 0 1 4.400 4.400c0 2.600-2.400 5.200-4.400 7.200C3 10.200.6 7.600.6 5A4.400 4.400 0 0 1 5 .600z" fill="none" stroke="#3f82f8" stroke-width="1.100"/><circle cx="5" cy="5" r="1.500" fill="none" stroke="#3f82f8" stroke-width="1"/></svg></div>
<div class="pill" style="top:270px">度量<svg class="abs" style="left:9px;top:5px" width="12" height="12" viewBox="0 0 12 12"><rect width="12" height="12" rx="2" fill="#2f78f6"/><path d="M5 2.500L4 9.500M8 2.500L7 9.500M3 4.800h6.300M2.700 7.300H9" stroke="#1c2c50" stroke-width="1.100"/></svg></div>
<div class="hdiv" style="left:0;top:313px;width:241px"></div>
<div class="pl star" style="left:14.5px;top:327.5px;font-size:17px;line-height:16px;color:#e8474d;margin-top:1px">*</div>
<div class="pl" style="left:28px;top:326.5px;font-size:12px;line-height:16px;font-weight:bold;color:#f0f0f2">度量</div>
<svg class="abs" style="left:216px;top:329px" width="11" height="11" viewBox="0 0 11 11"><path d="M4.300.600h2.400l.4 1.400 1.100.600 1.400-.4 1.200 2-1 1v1.600l1 1-1.200 2-1.400-.4-1.100.600-.4 1.400H4.300l-.4-1.400-1.100-.600-1.400.4-1.200-2 1-1V4.200l-1-1 1.200-2 1.400.4 1.100-.600z" transform="translate(.3 .2) scale(.95)" fill="none" stroke="#d0d1d5" stroke-width="1"/><circle cx="5.500" cy="5.500" r="1.600" fill="none" stroke="#d0d1d5" stroke-width="1"/></svg>
<div class="dash" style="top:352px;height:200px"></div>
<div class="pill g" style="top:354px">price(求和)<span class="abs" style="left:9px;top:0;font-size:10px;font-weight:bold;color:#2fb650;letter-spacing:-.5px">N<span style="font-size:8px;text-decoration:underline;vertical-align:2px">o</span></span><svg class="abs" style="left:174px;top:9px" width="8" height="5" viewBox="0 0 8 5"><path d="M0 0h8L4 5z" fill="#e0e0e3"/></svg><svg class="abs" style="left:190px;top:4px" width="12" height="14" viewBox="0 0 12 14"><path d="M.5 3h11M4 3V1h4v2M1.800 3l.6 10h7.200l.6-10" fill="none" stroke="#d0d1d5" stroke-width="1.100"/><path d="M4.700 5.500v5M7.300 5.500v5" stroke="#d0d1d5" stroke-width="1"/></svg></div>
<div class="hdiv" style="left:0;top:456px;width:241px"></div>
<div class="hdiv" style="left:0;top:536px;width:241px"></div>
<div class="abs" style="left:13px;top:381px;width:215px;height:236px;background:#1b1b1d;border:1px solid #34353a;border-radius:8px;box-shadow:0 6px 18px rgba(0,0,0,.35)">
<div class="mi" style="top:18.2px">数据展示格式</div>
<svg class="abs" style="left:196px;top:21.2px" width="7" height="11" viewBox="0 0 7 11"><path d="M1 .800l4.800 4.700L1 10.200" fill="none" stroke="#b9babf" stroke-width="1.100"/></svg>
<div class="mi" style="top:54.2px">聚合方式</div>
<svg class="abs" style="left:196px;top:57.2px" width="7" height="11" viewBox="0 0 7 11"><path d="M1 .800l4.800 4.700L1 10.200" fill="none" stroke="#b9babf" stroke-width="1.100"/></svg>
<div class="mi" style="top:90.7px">空值展示样式</div>
<svg class="abs" style="left:196px;top:93.7px" width="7" height="11" viewBox="0 0 7 11"><path d="M1 .800l4.800 4.700L1 10.200" fill="none" stroke="#b9babf" stroke-width="1.100"/></svg>
<div class="mi" style="top:126.7px">字段显示内容</div>
<div class="mi" style="top:163.2px">排序</div>
<svg class="abs" style="left:196px;top:166.2px" width="7" height="11" viewBox="0 0 7 11"><path d="M1 .800l4.800 4.700L1 10.200" fill="none" stroke="#b9babf" stroke-width="1.100"/></svg>
<div class="mi" style="top:200.2px">智能调整数据</div>
<svg class="abs" style="left:93px;top:203px" width="11" height="11" viewBox="0 0 11 11"><circle cx="5.500" cy="5.500" r="5.500" fill="#2d8cf0"/><path d="M3.500 8.500c-.5-2 .8-3 2-3.800 1-.7 1.300-1.700.8-2.700 1.700 1 2 2.800 1 4-.8 1-2 1.200-2.300 2.500z" fill="#cfe6ff"/></svg>
<div class="abs" style="left:8px;top:75px;width:197px;height:6px;border-bottom:1px solid #343437;border-radius:0 0 6px 6px"></div>
<div class="abs" style="left:8px;top:184px;width:197px;height:6px;border-bottom:1px solid #343437;border-radius:0 0 6px 6px"></div>
</div>
</div>
<div id="p3">
<div class="pl" style="left:12px;top:12px;font-size:14px;line-height:20px;color:#fff;font-weight:500">数据</div>
<div class="abs" style="left:8px;top:44px;width:40px;height:23px;border-radius:4px;background:#4d8bf8;color:#fff;font-size:12px;line-height:23px;padding-left:9px;font-weight:bold">测试</div>
<div class="pl" style="left:14px;top:84px;font-size:12px;line-height:16px;color:#fff">字段</div>
<div class="hdiv" style="left:0;top:108px;width:33px"></div>
<div class="pl" style="left:12px;top:117px;font-size:12px;line-height:16px;color:#fff;font-weight:bold">维度</div>
<div class="pl" style="left:25px;top:147px;font-size:11px;line-height:16px;color:#3f82f8;font-weight:bold">Str</div>
<svg class="abs" style="left:14px;top:183px" width="7" height="4" viewBox="0 0 7 4"><path d="M0 0h7L3.500 4z" fill="#b9babf"/></svg>
<svg class="abs" style="left:24px;top:179px" width="12" height="12" viewBox="0 0 12 12"><path d="M4 1h4v3H4zM.5 8h4v3h-4zM2.500 8V6h7v2M6 4v2" fill="none" stroke="#3f82f8" stroke-width="1.200"/></svg>
<div class="pl" style="left:25px;top:466px;font-size:11px;line-height:16px;color:#3f82f8;font-weight:bold">Str</div>
<div class="hdiv" style="left:0;top:487px;width:33px"></div>
<div class="pl" style="left:12px;top:497px;font-size:12px;line-height:16px;color:#fff;font-weight:bold">度量</div>
<div class="pl" style="left:25px;top:528.0px;font-size:11px;line-height:16px;color:#2fb650;font-weight:bold">No</div>
<div class="pl" style="left:25px;top:557.0px;font-size:11px;line-height:16px;color:#2fb650;font-weight:bold">No</div>
<div class="pl" style="left:25px;top:586.0px;font-size:11px;line-height:16px;color:#2fb650;font-weight:bold">No</div>
<div class="pl" style="left:25px;top:615.0px;font-size:11px;line-height:16px;color:#2fb650;font-weight:bold">No</div>
<div class="pl" style="left:25px;top:644.0px;font-size:11px;line-height:16px;color:#2fb650;font-weight:bold">No</div>
</div>
<div class="abs" style="left:1355px;top:382px;width:124px;height:62px;background:#1d1d1f;border-radius:3px;box-shadow:0 3px 6px -4px rgba(0,0,0,.12),0 6px 16px rgba(0,0,0,.08),0 9px 28px 8px rgba(0,0,0,.05);color:#9fa0a5;font-size:14px;line-height:21px;padding:11px 0 0 12px;white-space:nowrap">字段原名：<span style="color:#d6d7da">price</span><br>聚合方式：<span style="color:#d6d7da">求和</span></div>
<svg class="abs" style="left:1478px;top:402px" width="9" height="22" viewBox="0 0 9 22"><path d="M0 0c1 3 3 5 8.500 11C3 17 1 19 0 22z" fill="#1d1d1f"/></svg>
<div class="abs" style="left:1474px;top:365px;width:246px;height:311px;border:2px solid #27c04f;border-radius:5px"></div>
<div class="abs" style="left:1659px;top:359px;width:40px;height:34px;background:#fff;border-radius:4px;color:#1f1f1f;font-size:12px;line-height:34px;text-align:center">更多</div>
<svg class="abs" style="left:1674px;top:392px" width="10" height="4" viewBox="0 0 10 4"><path d="M0 0h10L5 4z" fill="#fff"/></svg>
<div class="abs" style="left:1478px;top:185px;width:6px;height:119px;border-radius:3px;background:#d0d0d0"></div>
</body>
</html>
